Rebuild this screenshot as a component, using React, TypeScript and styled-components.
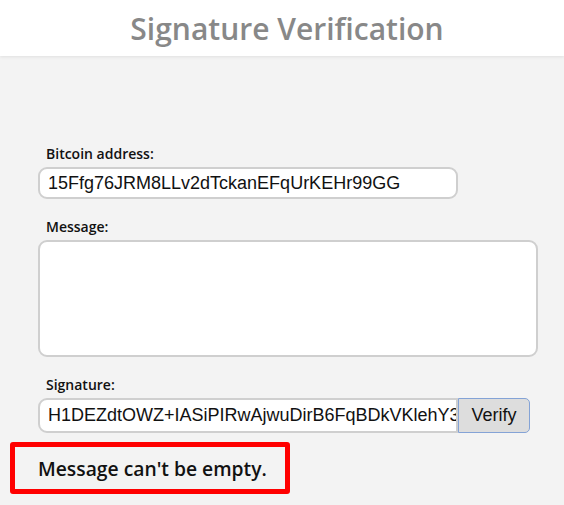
import React from "react";
import styled, { createGlobalStyle } from "styled-components";

const Global = createGlobalStyle`
  html, body { margin: 0; padding: 0; background: #f3f3f3; }
  body { font-family: "Open Sans", "Noto Sans", sans-serif; }
`;

const Header = styled.header`
  height: 56px;
  box-sizing: border-box;
  padding-left: 10px;
  background: #fff;
  box-shadow: 0 1px 3px rgba(0, 0, 0, 0.08);
  display: flex;
  align-items: center;
  justify-content: center;
`;

const Title = styled.h1`
  margin: 0;
  font-family: "Open Sans", "Noto Sans", sans-serif;
  font-weight: 600;
  font-size: 30px;
  color: #888;
`;

const Main = styled.main`
  padding: 89px 0 0 10px;
`;

const Form = styled.div`
  display: flex;
  flex-direction: column;
  padding-left: 28px;
`;

const Label = styled.label`
  display: block;
  margin: 0 0 4px 8px;
  font-size: 14px;
  line-height: 18px;
  font-weight: 600;
  color: #111;
`;

const Field = styled.div<{ $gap?: number }>`
  margin-bottom: ${(p) => p.$gap ?? 0}px;
`;

const TextInput = styled.input<{ $width: number; $flat?: boolean }>`
  box-sizing: border-box;
  width: ${(p) => p.$width}px;
  height: ${(p) => (p.$flat ? 35 : 32)}px;
  border: 2px solid #cfcfcf;
  border-radius: ${(p) => (p.$flat ? "9px 0 0 9px" : "9px")};
  background: #fff;
  padding: 0 ${(p) => (p.$flat ? 0 : 8)}px 0 8px;
  font-family: "Liberation Sans", Arial, sans-serif;
  font-size: 18px;
  color: #111;
  outline: none;
`;

const TextArea = styled.textarea`
  box-sizing: border-box;
  display: block;
  width: 500px;
  height: 117px;
  border: 2px solid #cfcfcf;
  border-radius: 9px;
  background: #fff;
  resize: none;
  outline: none;
`;

const Row = styled.div`
  display: flex;
`;

const VerifyButton = styled.button`
  box-sizing: border-box;
  width: 72px;
  height: 35px;
  background: #dddddd;
  border: 1px solid #84a3d6;
  border-radius: 0 5px 5px 0;
  font-family: "Liberation Sans", Arial, sans-serif;
  font-size: 18px;
  color: #111;
  padding: 0;
`;

const ErrorBox = styled.div`
  box-sizing: border-box;
  margin-top: 9px;
  width: 280px;
  height: 52px;
  border: 5px solid #ff0000;
  border-radius: 3px;
  display: flex;
  align-items: center;
  padding-left: 23px;
  font-size: 19.3px;
  font-weight: 600;
  color: #111;
`;

export default function App() {
  return (
    <>
      <Global />
      <Header>
        <Title>Signature Verification</Title>
      </Header>
      <Main>
        <Form>
          <Field $gap={19}>
            <Label>Bitcoin address:</Label>
            <TextInput $width={420} defaultValue="15Ffg76JRM8LLv2dTckanEFqUrKEHr99GG" />
          </Field>
          <Field $gap={19}>
            <Label>Message:</Label>
            <TextArea />
          </Field>
          <Field>
            <Label>Signature:</Label>
            <Row>
              <TextInput $width={420} $flat defaultValue="H1DEZdtOWZ+IASiPIRwAjwuDirB6FqBDkVKlehY3xQmHkP8" />
              <VerifyButton>Verify</VerifyButton>
            </Row>
          </Field>
        </Form>
        <ErrorBox>Message can't be empty.</ErrorBox>
      </Main>
    </>
  );
}
